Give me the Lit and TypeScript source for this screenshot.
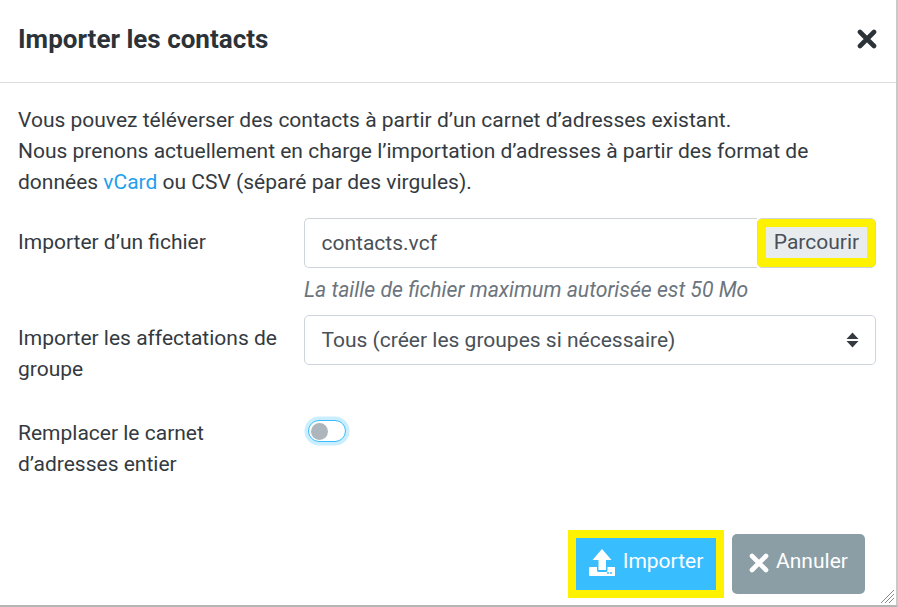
import { LitElement, html, css } from "lit";
import { customElement } from "lit/decorators.js";

@customElement("app-root")
export class AppRoot extends LitElement {
  static styles = css`
    :host { display: block; width: 898px; height: 607px; overflow: hidden; font-family: Roboto, sans-serif; font-size: 21px; line-height: 31px; color: #343a40; background: #fff; box-sizing: border-box; }
    .dialog { position: relative; width: 896px; height: 605px; border-right: 2px solid #c9c9c9; border-bottom: 2px solid #b5b5b5; display: flex; flex-direction: column; }
    .head { box-sizing: content-box; border-bottom: 1px solid #dcdcdc; display: flex; align-items: center; justify-content: space-between; padding: 0 19px 4px 18px; height: 78px; }
    h1 { margin: 0; font-size: 26px; font-weight: 700; color: #2c3338; line-height: 32px; }
    .close { display: block; margin-top: -1px; }
    .body { padding: 22px 20px 0 18px; }
    p { margin: 0 0 20px; }
    a { color: #1e9fee; text-decoration: none; }
    .row { display: grid; grid-template-columns: 286px 572px; }
    .lab { padding-top: 8px; }
    .lab.first { padding-top: 9px; }
    .lab.last { padding-top: 7px; }
    .file { display: flex; height: 50px; }
    .fname { flex: 1; box-sizing: border-box; border: 1px solid #ced4da; border-right: none; border-radius: 5px 0 0 5px; padding: 9px 16.5px; color: #495057; }
    .browse { width: 119px; box-sizing: border-box; border: 1px solid #ced4da; border-radius: 5px; display: flex; }
    .browse span { flex: 1; box-sizing: border-box; border: 8px solid #fff200; border-bottom-width: 9px; border-radius: 3px; background: #e9ecef; display: flex; align-items: center; justify-content: center; color: #495057; }
    .hint { font-style: italic; color: #6c757d; font-size: 21.2px; margin-top: 6px; line-height: 31px; height: 41px; }
    .sel { height: 50px; box-sizing: border-box; border: 1px solid #ced4da; border-radius: 5px; padding: 9px 16px 9px 16.5px; color: #495057; display: flex; justify-content: space-between; align-items: center; }
    .r2 { height: 96px; }
    .sw { margin: 9px 0 0 4px; width: 38px; height: 22px; box-sizing: border-box; border: 1.5px solid #38bdff; border-radius: 11px; box-shadow: 0 0 0 3.5px #cbeeff; background: #fff; display: flex; align-items: center; padding-left: 2px; }
    .knob { width: 17px; height: 17px; border-radius: 50%; background: #adb5bd; }
    .foot { position: absolute; right: 31px; bottom: 7px; display: flex; align-items: center; gap: 8px; }
    .btn { color: #fff; display: flex; align-items: center; justify-content: center; box-sizing: border-box; padding-bottom: 5px; }
    .btn svg { margin-top: 3px; }
    .ok svg { margin-top: 2px; }
    .ok { width: 156px; height: 68px; border: 8px solid #fff200; background: #38bdff; gap: 8px; }
    .no { width: 133px; height: 60px; background: #8b9ea5; border-radius: 5px; gap: 7px; }
    .grip { position: absolute; right: 2px; bottom: 2px; }
  `;
  render() {
    return html`<div class="dialog">
      <div class="head">
        <h1>Importer les contacts</h1>
        <svg class="close" width="20" height="20" viewBox="0 0 20 20"><path d="M3 3l14 14M17 3L3 17" stroke="#2c3338" stroke-width="4.6" stroke-linecap="round"/></svg>
      </div>
      <div class="body">
        <p>Vous pouvez téléverser des contacts à partir d’un carnet d’adresses existant.<br>Nous prenons actuellement en charge l’importation d’adresses à partir des format de<br>données <a>vCard</a> ou CSV (séparé par des virgules).</p>
        <div class="row">
          <div class="lab first">Importer d’un fichier</div>
          <div>
            <div class="file"><div class="fname">contacts.vcf</div><div class="browse"><span>Parcourir</span></div></div>
            <div class="hint">La taille de fichier maximum autorisée est 50 Mo</div>
          </div>
        </div>
        <div class="row r2">
          <div class="lab">Importer les affectations de groupe</div>
          <div class="sel">Tous (créer les groupes si nécessaire)
            <svg width="13" height="16" viewBox="0 0 13 16"><path d="M6.500 0.500l6 6.500H.5zM6.500 15.500L.5 9h12z" fill="#343a40"/></svg>
          </div>
        </div>
        <div class="row">
          <div class="lab last">Remplacer le carnet<br>d’adresses entier</div>
          <div><div class="sw"><div class="knob"></div></div></div>
        </div>
      </div>
      <div class="foot">
        <div class="btn ok">
          <svg width="26" height="27" viewBox="0 0 26 27"><path d="M13 0l9.500 11H17v10H9.500V11H3.500z" fill="#fff"/><path d="M1 18h7v3.500a1.500 1.500 0 0 0 1.500 1.500h7.500a1.500 1.500 0 0 0 1.500-1.500V18h7a1 1 0 0 1 1 1v7a1 1 0 0 1-1 1H1a1 1 0 0 1-1-1v-7a1 1 0 0 1 1-1z" fill="#fff"/><circle cx="19" cy="24" r="1" fill="#38bdff"/><circle cx="22" cy="24" r="1" fill="#38bdff"/></svg>
          Importer
        </div>
        <div class="btn no">
          <svg width="20" height="20" viewBox="0 0 20 20"><path d="M3 3l14 14M17 3L3 17" stroke="#fff" stroke-width="4.600" stroke-linecap="round"/></svg>
          Annuler
        </div>
      </div>
      <svg class="grip" width="14" height="14" viewBox="0 0 14 14"><path d="M1 14L14 1M5 14l9-9M9 14l5-5" stroke="#8a8a8a" stroke-width="1"/></svg>
    </div>`;
  }
}
